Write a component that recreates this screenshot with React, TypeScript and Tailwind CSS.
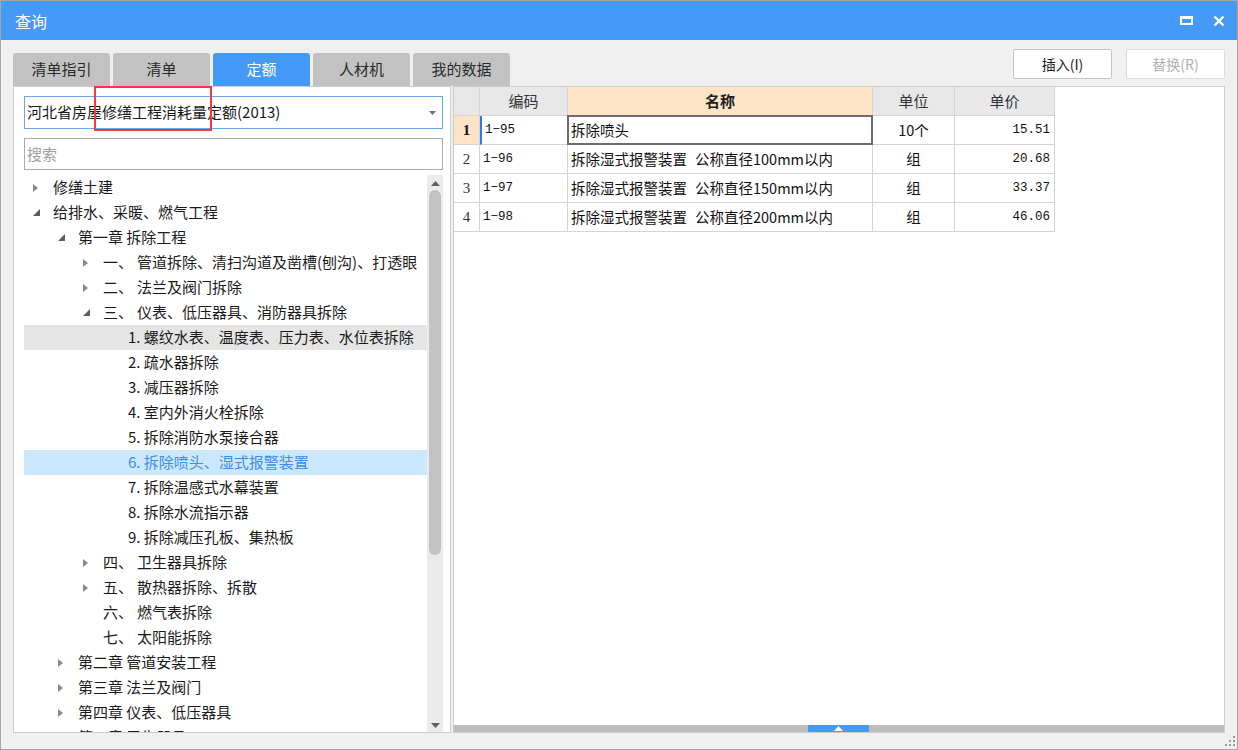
import React from 'react';

type TreeNode = {
  level: number;
  label: string;
  prefix?: string;
  state?: 'open' | 'closed';
  hover?: boolean;
  selected?: boolean;
};

const tree: TreeNode[] = [
  { level: 0, label: '修缮土建', state: 'closed' },
  { level: 0, label: '给排水、采暖、燃气工程', state: 'open' },
  { level: 1, label: '第一章 拆除工程', state: 'open' },
  { level: 2, prefix: '一、', label: '管道拆除、清扫沟道及凿槽(刨沟)、打透眼', state: 'closed' },
  { level: 2, prefix: '二、', label: '法兰及阀门拆除', state: 'closed' },
  { level: 2, prefix: '三、', label: '仪表、低压器具、消防器具拆除', state: 'open' },
  { level: 3, label: '1. 螺纹水表、温度表、压力表、水位表拆除', hover: true },
  { level: 3, label: '2. 疏水器拆除' },
  { level: 3, label: '3. 减压器拆除' },
  { level: 3, label: '4. 室内外消火栓拆除' },
  { level: 3, label: '5. 拆除消防水泵接合器' },
  { level: 3, label: '6. 拆除喷头、湿式报警装置', selected: true },
  { level: 3, label: '7. 拆除温感式水幕装置' },
  { level: 3, label: '8. 拆除水流指示器' },
  { level: 3, label: '9. 拆除减压孔板、集热板' },
  { level: 2, prefix: '四、', label: '卫生器具拆除', state: 'closed' },
  { level: 2, prefix: '五、', label: '散热器拆除、拆散', state: 'closed' },
  { level: 2, prefix: '六、', label: '燃气表拆除' },
  { level: 2, prefix: '七、', label: '太阳能拆除' },
  { level: 1, label: '第二章 管道安装工程', state: 'closed' },
  { level: 1, label: '第三章 法兰及阀门', state: 'closed' },
  { level: 1, label: '第四章 仪表、低压器具', state: 'closed' },
  { level: 1, label: '第五章 卫生器具', state: 'closed' },
];

const rows = [
  { code: '1-95', name: '拆除喷头', spec: '', unit: '10个', price: '15.51' },
  { code: '1-96', name: '拆除湿式报警装置', spec: '公称直径100mm以内', unit: '组', price: '20.68' },
  { code: '1-97', name: '拆除湿式报警装置', spec: '公称直径150mm以内', unit: '组', price: '33.37' },
  { code: '1-98', name: '拆除湿式报警装置', spec: '公称直径200mm以内', unit: '组', price: '46.06' },
];

const tabs = ['清单指引', '清单', '定额', '人材机', '我的数据'];

const padByLevel = ['pl-[9px]', 'pl-[34px]', 'pl-[59px]', 'pl-[84px]'];

function Arrow({ state }: { state?: 'open' | 'closed' }) {
  if (state === 'closed') {
    return (
      <svg width="5" height="8" viewBox="0 0 5 8">
        <path d="M0 0L5 4L0 8Z" fill="#8a8a8a" />
      </svg>
    );
  }
  if (state === 'open') {
    return (
      <svg width="7" height="7" viewBox="0 0 7 7">
        <path d="M7 0V7H0Z" fill="#5c5c5c" />
      </svg>
    );
  }
  return null;
}

function TreeRow({ node }: { node: TreeNode }) {
  const bg = node.selected ? 'bg-[#cce8ff]' : node.hover ? 'bg-[#e5e5e5]' : '';
  const color = node.selected ? 'text-[#3c8ee8]' : 'text-[#1a1a1a]';
  return (
    <div className={`flex h-[25px] items-center whitespace-nowrap ${padByLevel[node.level]} ${bg} ${color}`}>
      <div className="flex w-[20px] shrink-0 items-center">
        <Arrow state={node.state} />
      </div>
      {node.prefix && <span className="w-[34px] shrink-0">{node.prefix}</span>}
      <span>{node.label}</span>
    </div>
  );
}

function VScroll() {
  return (
    <div className="flex w-[16px] shrink-0 flex-col items-center bg-[#ebebeb]">
      <svg className="mt-[6px]" width="9" height="5" viewBox="0 0 9 5">
        <path d="M4.5 0L9 5H0Z" fill="#606060" />
      </svg>
      <div className="mt-[4px] h-[365px] w-[12px] rounded-full bg-[#c2c2c2]" />
      <div className="flex-1" />
      <svg className="mb-[4px]" width="9" height="5" viewBox="0 0 9 5">
        <path d="M0 0H9L4.5 5Z" fill="#606060" />
      </svg>
    </div>
  );
}

function LeftPanel() {
  return (
    <div className="relative flex w-[438px] flex-col border border-[#cdcdcd] bg-white pl-[10px] pr-[7px] pt-[9px]">
      <div className="flex h-[33px] items-center justify-between border border-[#68a7ee] pl-[2px] pr-[6px] text-[15px] text-[#1a1a1a]">
        <span>河北省房屋修缮工程消耗量定额(2013)</span>
        <svg width="7" height="4" viewBox="0 0 7 4">
          <path d="M0 0H7L3.5 4Z" fill="#707070" />
        </svg>
      </div>
      <div className="mt-[9px] flex h-[32px] items-center border border-[#ababab] pl-[2px] text-[15px] text-[#a0a0a0]">
        搜索
      </div>
      <div className="mt-[5px] flex flex-1 overflow-hidden text-[15px]">
        <div className="flex-1 overflow-hidden">
          {tree.map((n, i) => (
            <TreeRow key={i} node={n} />
          ))}
        </div>
        <VScroll />
      </div>
      {/* red annotation box */}
      <div className="absolute left-[80px] top-[-1px] h-[45px] w-[118px] border-2 border-[#f03c3c]" />
    </div>
  );
}

const cellBorder = 'border-r border-b border-[#d4d4d4]';

function RightPanel() {
  return (
    <div className="flex w-[772px] flex-col border border-[#cdcdcd] bg-white">
      <div className="flex-1 overflow-hidden">
        <div className="flex h-[29px] text-[15px] text-[#333]">
          <div className={`w-[26px] bg-[#e8e8e8] ${cellBorder}`} />
          <div className={`flex w-[88px] items-center justify-center bg-[#e8e8e8] ${cellBorder}`}>编码</div>
          <div className={`flex w-[305px] items-center justify-center bg-[#fde4c6] font-bold text-[#222] ${cellBorder}`}>名称</div>
          <div className={`flex w-[82px] items-center justify-center bg-[#e8e8e8] ${cellBorder}`}>单位</div>
          <div className={`flex w-[100px] items-center justify-center bg-[#e8e8e8] ${cellBorder}`}>单价</div>
        </div>
        {rows.map((r, i) => {
          const first = i === 0;
          return (
            <div key={r.code} className="flex h-[29px] text-[14.5px] text-[#111]">
              <div
                className={`flex w-[26px] items-center justify-center font-['Liberation_Serif',serif] text-[15px] ${cellBorder} ${
                  first ? 'bg-[#fde4c6] font-bold' : 'text-[#333]'
                }`}
              >
                {i + 1}
              </div>
              <div
                className={`flex w-[88px] items-center pl-[3px] font-['Liberation_Mono',monospace] text-[12.5px] ${cellBorder} ${
                  first ? 'border-l-2 border-l-[#2a7cf0]' : ''
                }`}
              >
                {r.code.replace('-', '−')}
              </div>
              <div className={`relative flex w-[305px] items-center whitespace-nowrap pl-[3px] ${cellBorder}`}>
                <span>{r.name}</span>
                {r.spec && <span className="ml-[8px]">{r.spec}</span>}
                {first && <div className="absolute inset-[-1px] border-2 border-[#6c6c6c]" />}
              </div>
              <div className={`flex w-[82px] items-center justify-center ${cellBorder}`}>{r.unit}</div>
              <div className={`flex w-[100px] items-center justify-end pr-[4px] font-['Liberation_Mono',monospace] text-[12.5px] ${cellBorder}`}>
                {r.price}
              </div>
            </div>
          );
        })}
      </div>
      <div className="flex h-[7px] bg-[#bdbdbd]">
        <div className="w-[354px]" />
        <div className="flex w-[61px] items-center justify-center bg-[#4599f7]">
          <svg width="9" height="5" viewBox="0 0 9 5">
            <path d="M4.5 0L9 5H0Z" fill="#ffffff" />
          </svg>
        </div>
      </div>
    </div>
  );
}

export default function App() {
  return (
    <div className="flex h-[750px] w-[1238px] flex-col border border-[#a6a6a6] bg-[#f0f0f0] font-['Noto_Sans_CJK_SC','Noto_Sans',sans-serif]">
      {/* title bar */}
      <div className="flex h-[39px] shrink-0 items-center justify-between bg-[#4599f7] pl-[14px] pr-[12px] text-white">
        <span className="text-[16px]">查询</span>
        <div className="flex items-center gap-[20px]">
          <div className="h-[9px] w-[13px] border-2 border-t-[3px] border-white" />
          <svg width="12" height="12" viewBox="0 0 12 12">
            <path d="M1.5 1.5L10.5 10.5M10.5 1.5L1.5 10.5" stroke="#ffffff" strokeWidth="2.4" />
          </svg>
        </div>
      </div>

      <div className="relative flex flex-1 flex-col px-[12px]">
        {/* tabs + buttons */}
        <div className="flex h-[46px] shrink-0 justify-between">
          <div className="flex items-end gap-[3px]">
            {tabs.map((t) => (
              <div
                key={t}
                className={`flex h-[33px] w-[97px] items-center justify-center rounded-t-[3px] text-[15px] ${
                  t === '定额' ? 'bg-[#4599f7] text-white' : 'bg-[#c2c2c2] text-[#2a2a2a]'
                }`}
              >
                {t}
              </div>
            ))}
          </div>
          <div className="flex items-start gap-[14px] pt-[9px]">
            <div className="flex h-[30px] w-[99px] items-center justify-center rounded-[2px] border border-[#c6c6c6] bg-white text-[14px] text-[#1a1a1a]">
              插入(I)
            </div>
            <div className="flex h-[30px] w-[99px] items-center justify-center rounded-[2px] border border-[#dedede] bg-white text-[14px] text-[#b0b0b0]">
              替换(R)
            </div>
          </div>
        </div>

        {/* panels */}
        <div className="flex h-[647px] shrink-0 gap-[2px]">
          <LeftPanel />
          <RightPanel />
        </div>

        {/* resize grip */}
        <svg className="absolute bottom-[3px] right-[2px]" width="10" height="10" viewBox="0 0 10 10">
          <rect x="8" y="0" width="2" height="2" fill="#9a9a9a" />
          <rect x="4" y="4" width="2" height="2" fill="#9a9a9a" />
          <rect x="8" y="4" width="2" height="2" fill="#9a9a9a" />
          <rect x="0" y="8" width="2" height="2" fill="#9a9a9a" />
          <rect x="4" y="8" width="2" height="2" fill="#9a9a9a" />
          <rect x="8" y="8" width="2" height="2" fill="#9a9a9a" />
        </svg>
      </div>
    </div>
  );
}
